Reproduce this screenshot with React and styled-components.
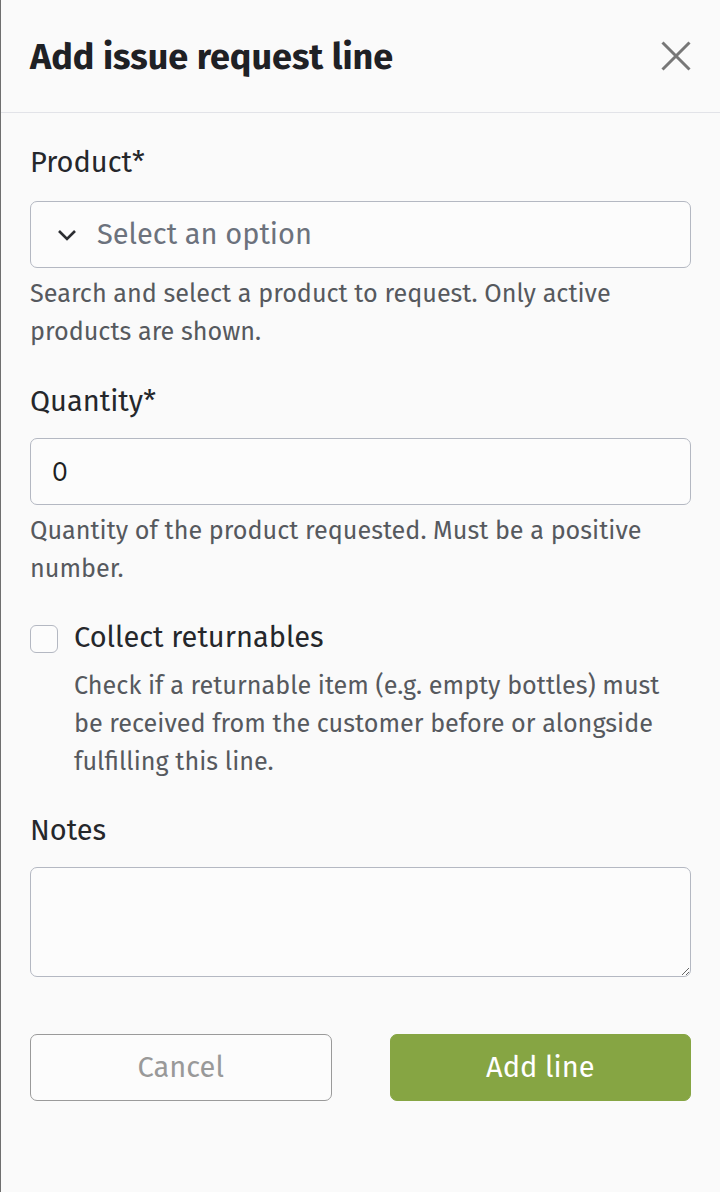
import React from "react";
import styled, { createGlobalStyle } from "styled-components";

const FONT = `"Fira Sans", Roboto, "Noto Sans", sans-serif`;

const Global = createGlobalStyle`
  html, body { margin: 0; padding: 0; background: #fafafa; }
  body { font-family: ${FONT}; -webkit-font-smoothing: antialiased; }
  * { box-sizing: border-box; }
`;

const Panel = styled.div`
  width: 720px;
  min-height: 1192px;
  background: #fafafa;
  border-left: 1px solid #6f6f6f;
  display: flex;
  flex-direction: column;
`;

const Header = styled.header`
  height: 113px;
  display: flex;
  align-items: center;
  justify-content: space-between;
  padding: 0 29px 0 29px;
  border-bottom: 1px solid #e2e3e8;
`;

const Title = styled.h1`
  margin: 0;
  font-size: 36px;
  font-weight: 700;
  color: #1f2125;
  letter-spacing: 0;
  padding-top: 1px;
`;

const CloseButton = styled.button`
  width: 30px;
  height: 30px;
  padding: 0;
  border: 0;
  background: none;
  display: flex;
  align-items: center;
  justify-content: center;
  cursor: pointer;
`;

const Body = styled.form`
  padding: 30px 29px 0 29px;
  display: flex;
  flex-direction: column;
`;

const Field = styled.div`
  display: flex;
  flex-direction: column;
  margin-bottom: ${(p) => p.$mb || 0}px;
`;

const Label = styled.label`
  font-size: 29px;
  line-height: 40px;
  color: #25272b;
  margin-bottom: ${(p) => p.$mb || 18}px;
`;

const InputBox = styled.div`
  height: 67px;
  border: 1px solid #b4b8c2;
  border-radius: 7px;
  background: #fcfcfc;
  display: flex;
  align-items: center;
  padding-left: 26px;
  gap: 20px;
`;

const Placeholder = styled.span`
  font-size: 29px;
  color: #6c727d;
`;

const NumberInput = styled.input`
  height: 67px;
  border: 1px solid #b4b8c2;
  border-radius: 7px;
  background: #fcfcfc;
  padding: 0 21px;
  font-family: Inter, "Liberation Sans", sans-serif;
  font-size: 25px;
  color: #1d1f23;
  outline: none;
`;

const Help = styled.p`
  margin: ${(p) => p.$mt ?? 7}px 0 0 0;
  font-size: 25.2px;
  line-height: 38px;
  color: #56595e;
`;

const CheckRow = styled.div`
  display: flex;
  align-items: flex-start;
  gap: 16px;
`;

const Checkbox = styled.span`
  flex: none;
  width: 28px;
  height: 28px;
  margin-top: 7px;
  border: 1px solid #b4b8c2;
  border-radius: 6px;
  background: #fcfcfc;
`;

const CheckText = styled.div`
  display: flex;
  flex-direction: column;
`;

const CheckLabel = styled.span`
  font-size: 29px;
  line-height: 40px;
  color: #25272b;
`;

const TextArea = styled.textarea`
  height: 110px;
  border: 1px solid #b4b8c2;
  border-radius: 7px;
  background: #fcfcfc;
  resize: vertical;
  outline: none;
  font-family: ${FONT};
  font-size: 28px;
  padding: 12px 20px;
`;

const Actions = styled.div`
  display: grid;
  grid-template-columns: 1fr 1fr;
  column-gap: 58px;
  margin-top: 57px;
`;

const Button = styled.button`
  height: 67px;
  border-radius: 7px;
  font-family: ${FONT};
  font-size: 29px;
  font-weight: 400;
  cursor: pointer;
  border: 1px solid ${(p) => (p.$primary ? "#86a543" : "#9a9a9a")};
  background: ${(p) => (p.$primary ? "#86a543" : "#fcfcfc")};
  color: ${(p) => (p.$primary ? "#ffffff" : "#999999")};
`;

export default function App() {
  return (
    <>
      <Global />
      <Panel>
        <Header>
          <Title>Add issue request line</Title>
          <CloseButton type="button" aria-label="Close">
            <svg width="30" height="30" viewBox="0 0 30 30">
              <path d="M1.5 1.5 L28.5 28.5 M28.5 1.5 L1.5 28.5" stroke="#777" strokeWidth="3" fill="none" />
            </svg>
          </CloseButton>
        </Header>
        <Body onSubmit={(e) => e.preventDefault()}>
          <Field $mb={31}>
            <Label $mb={18}>Product*</Label>
            <InputBox>
              <svg width="20" height="12" viewBox="0 0 20 12">
                <path d="M2 2 L10 10 L18 2" stroke="#2b2d31" strokeWidth="2.6" fill="none" />
              </svg>
              <Placeholder>Select an option</Placeholder>
            </InputBox>
            <Help>Search and select a product to request. Only active products are shown.</Help>
          </Field>
          <Field $mb={30}>
            <Label $mb={16}>Quantity*</Label>
            <NumberInput type="text" defaultValue="0" />
            <Help>Quantity of the product requested. Must be a positive number.</Help>
          </Field>
          <Field $mb={30}>
            <CheckRow>
              <Checkbox />
              <CheckText>
                <CheckLabel>Collect returnables</CheckLabel>
                <Help $mt={9}>
                  Check if a returnable item (e.g. empty bottles) must be received from the customer before or alongside fulfilling this line.
                </Help>
              </CheckText>
            </CheckRow>
          </Field>
          <Field>
            <Label $mb={16}>Notes</Label>
            <TextArea />
          </Field>
          <Actions>
            <Button type="button">Cancel</Button>
            <Button type="submit" $primary>Add line</Button>
          </Actions>
        </Body>
      </Panel>
    </>
  );
}
